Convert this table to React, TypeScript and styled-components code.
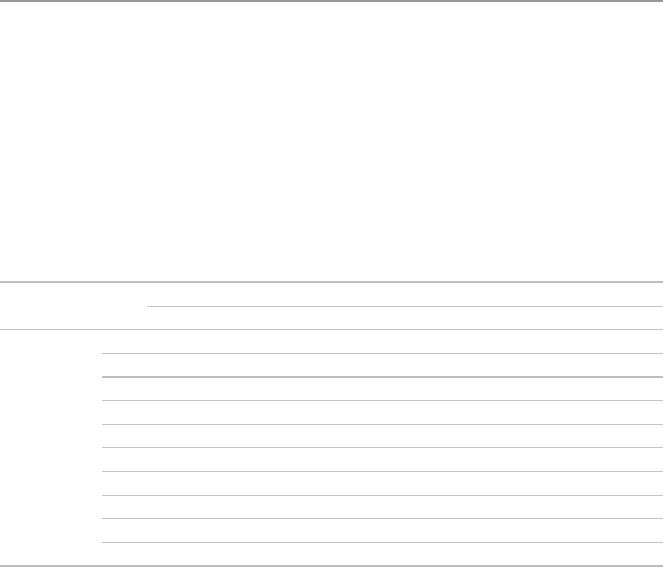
import * as React from "react";
import styled, { createGlobalStyle } from "styled-components";

// each row: inner height, then thickness of the rule under it
const headRows = [
  { h: 23, rule: 1 },
  { h: 22, rule: 0 },
];

const bodyRows = [
  { h: 23, rule: 1 },
  { h: 22, rule: 2 },
  { h: 22, rule: 1 },
  { h: 23, rule: 1 },
  { h: 22, rule: 1 },
  { h: 23, rule: 1 },
  { h: 23, rule: 1 },
  { h: 22, rule: 1 },
  { h: 23, rule: 1 },
  { h: 22, rule: 0 },
];

const App = () => {
  return (
    <>
      <GlobalStyle />
      <Page>
        <Blank />
        <Table>
          <Group $lead={147} $rule={1}>
            <LeadCell />
            <Stack>
              {headRows.map((r, i) => (
                <Row key={i} $h={r.h} $rule={r.rule} />
              ))}
            </Stack>
          </Group>
          <Group $lead={102} $rule={0}>
            <LeadCell />
            <Stack>
              {bodyRows.map((r, i) => (
                <Row key={i} $h={r.h} $rule={r.rule} />
              ))}
            </Stack>
          </Group>
        </Table>
      </Page>
    </>
  );
};

export default App;

const GlobalStyle = createGlobalStyle`
  html, body {
    margin: 0;
    padding: 0;
    background: #fff;
    font-family: "Liberation Sans", Arial, sans-serif;
  }
`;

const Page = styled.div`
  display: flex;
  flex-direction: column;
  width: 663px;
  height: 567px;
  overflow: hidden;
`;

const Blank = styled.div`
  height: 279px;
  border-top: 2px solid #999999;
`;

const Table = styled.div`
  display: flex;
  flex-direction: column;
  border-top: 2px solid #bdbdbd;
  border-bottom: 2px solid #bdbdbd;
`;

const Group = styled.div<{ $lead: number; $rule: number }>`
  display: grid;
  grid-template-columns: ${(p) => p.$lead}px 1fr;
  border-bottom: ${(p) => p.$rule}px solid #c4c4c4;
`;

const LeadCell = styled.div``;

const Stack = styled.div`
  display: flex;
  flex-direction: column;
`;

const Row = styled.div<{ $h: number; $rule: number }>`
  height: ${(p) => p.$h}px;
  border-bottom: ${(p) => p.$rule}px solid ${(p) => (p.$rule > 1 ? "#bdbdbd" : "#c4c4c4")};
`;
